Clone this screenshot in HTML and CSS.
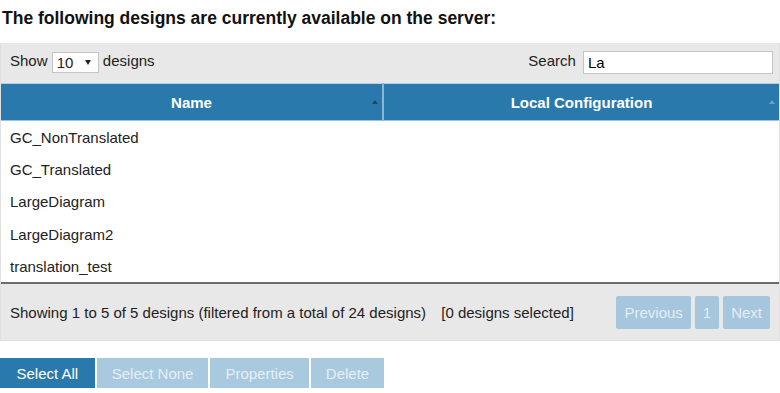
FILE: index.html
```html
<!DOCTYPE html>
<html lang="en">

<head>
    <meta charset="UTF-8">
    <meta name="viewport" content="width=device-width, initial-scale=1.0">
    <title>Designs</title>
    <link rel="stylesheet" href="styles.css">
</head>

<body>

    <h2 class="title">The following designs are currently available on the server:</h2>

    <div class="designs">
        <div class="toolbar">
            <label class="length">Show <span class="select">10 <span class="caret"></span></span> designs</label>
            <label class="search">Search <input type="text" value="La"></label>
        </div>

        <table class="grid">
            <thead>
                <tr>
                    <th class="sorted">Name <span class="sort"></span></th>
                    <th>Local Configuration <span class="sort"></span></th>
                </tr>
            </thead>
            <tbody>
                <tr><td>GC_NonTranslated</td><td></td></tr>
                <tr><td>GC_Translated</td><td></td></tr>
                <tr><td>LargeDiagram</td><td></td></tr>
                <tr><td>LargeDiagram2</td><td></td></tr>
                <tr><td>translation_test</td><td></td></tr>
            </tbody>
        </table>

        <div class="footer">
            <div class="info">Showing 1 to 5 of 5 designs (filtered from a total of 24 designs) <span class="selected">[0 designs selected]</span></div>
            <div class="pager">
                <button class="page">Previous</button>
                <button class="page">1</button>
                <button class="page">Next</button>
            </div>
        </div>
    </div>

    <div class="actions">
        <button class="action primary">Select All</button>
        <button class="action">Select None</button>
        <button class="action">Properties</button>
        <button class="action">Delete</button>
    </div>

</body>

</html>
```

FILE: styles.css
```css
body {
    font-family: 'Liberation Sans', Arial, sans-serif;
    font-size: 15px;
    color: #222222;
    margin: 0;
    padding: 0;
    background-color: #ffffff;
}

.title {
    font-size: 17.5px;
    font-weight: bold;
    color: #111111;
    margin: 0;
    padding: 8px 2px 0;
    height: 43px;
    box-sizing: border-box;
}

.designs {
    width: 780px;
    background-color: #e8e8e8;
    border: 1px solid #e0e0e0;
    border-top: none;
    box-sizing: border-box;
}

.toolbar {
    display: flex;
    justify-content: space-between;
    align-items: center;
    height: 40px;
    padding: 0 6px 2px 9px;
    box-sizing: border-box;
}

.select {
    display: inline-flex;
    align-items: center;
    justify-content: space-between;
    width: 47px;
    height: 21px;
    padding: 0 7px 0 4px;
    box-sizing: border-box;
    background-color: #ffffff;
    border: 1px solid #c4c4c4;
    vertical-align: middle;
}

.caret {
    border-left: 3px solid transparent;
    border-right: 3px solid transparent;
    border-top: 5px solid #222222;
}

.search input {
    width: 190px;
    height: 23px;
    margin-left: 3px;
    padding: 0 4px;
    box-sizing: border-box;
    border: 1px solid #c4c4c4;
    font-family: inherit;
    font-size: 15px;
    vertical-align: middle;
}

.grid {
    width: 100%;
    border-collapse: collapse;
    background-color: #ffffff;
}

.grid th {
    position: relative;
    height: 36px;
    padding: 0;
    background-color: #2a79ad;
    color: #ffffff;
    font-size: 15px;
    font-weight: bold;
    text-align: center;
    border-top: 1px solid #b9d0e0;
    border-bottom: 1px solid #9fc0d8;
}

.grid th:first-child {
    width: 381px;
    border-right: 2px solid #8fb5d1;
}

.sort {
    position: absolute;
    right: 4px;
    top: 16px;
    border-left: 3px solid transparent;
    border-right: 3px solid transparent;
    border-bottom: 4px solid #6e9ec0;
}

.sorted .sort {
    border-bottom-color: #1f4763;
}

.grid td {
    height: 32.6px;
    padding: 0 9px;
    box-sizing: border-box;
}

.grid tbody tr:last-child td {
    border-bottom: 2px solid #6b6b6b;
}

.footer {
    display: flex;
    justify-content: space-between;
    align-items: center;
    height: 56px;
    padding: 0 9px 0 9px;
}

.selected {
    margin-left: 11px;
}

.pager {
    display: flex;
    gap: 4px;
}

.page {
    height: 33px;
    padding: 0 8px;
    border: none;
    border-radius: 2px;
    background-color: #a5c6dc;
    color: #e4eef5;
    font-family: inherit;
    font-size: 15px;
}

.actions {
    display: flex;
    gap: 2px;
    margin-top: 17px;
}

.action {
    height: 30px;
    padding: 0 15px;
    border: none;
    background-color: #a9c9df;
    color: #e6eff6;
    font-family: inherit;
    font-size: 15px;
}

.action.primary {
    padding: 0 16.5px;
    background-color: #2a79ad;
    color: #ffffff;
}
```
